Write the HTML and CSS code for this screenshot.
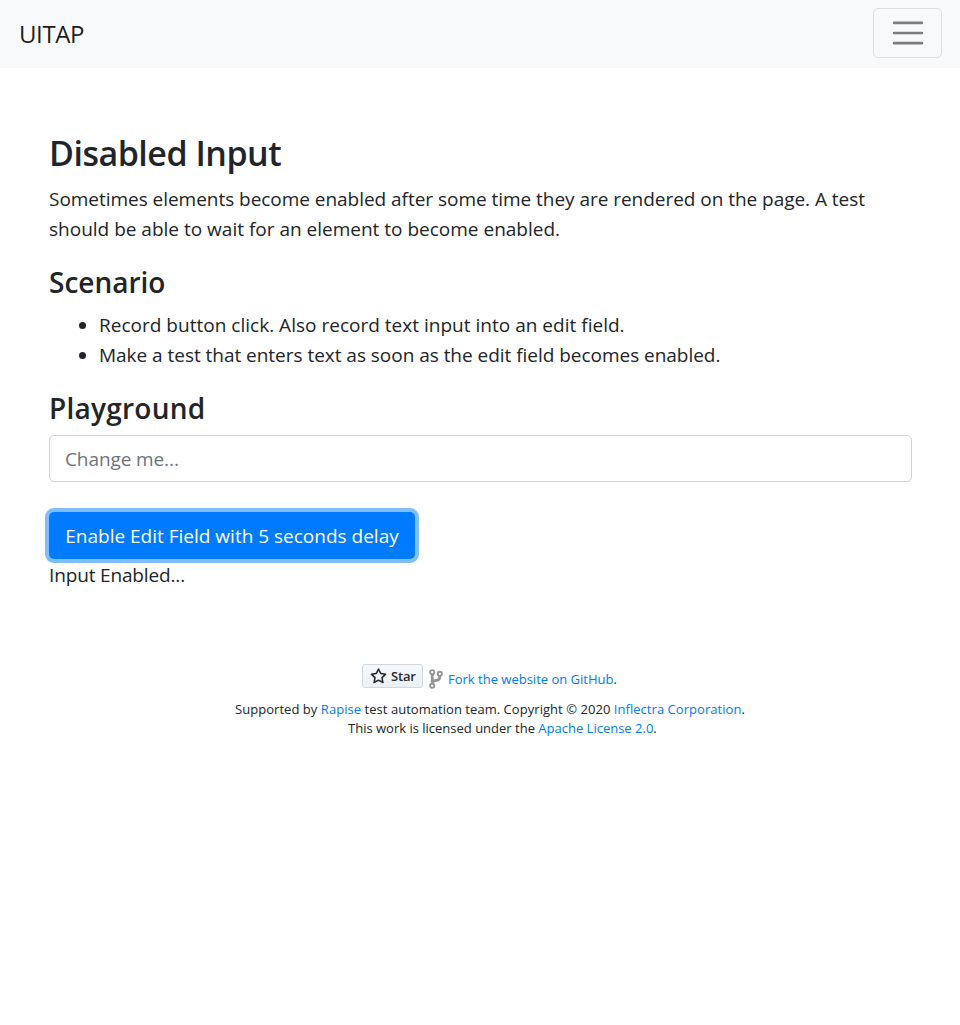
FILE: index.html
```html
<!DOCTYPE html>
<html lang="en">
<head>
<meta charset="utf-8">
<title>Disabled Input</title>
<link rel="stylesheet" href="styles.css">
</head>
<body>
<nav class="navbar">
  <a class="brand">UITAP</a>
  <button class="toggler" aria-label="Toggle navigation">
    <svg width="38" height="38" viewBox="0 0 30 30"><path d="M4 7h22M4 15h22M4 23h22" stroke="rgba(0,0,0,.5)" stroke-width="2" stroke-linecap="round" stroke-miterlimit="10"/></svg>
  </button>
</nav>
<main class="container">
  <h3 class="title"><span>Disabled Input</span></h3>
  <p class="intro"><span class="intro-first">Sometimes elements become enabled after some time they are rendered on the page. A test</span><br><span class="intro-second">should be able to wait for an element to become enabled.</span></p>
  <h4 class="scenario"><span>Scenario</span></h4>
  <ul class="steps">
    <li><span class="step-one">Record button click. Also record text input into an edit field.</span></li>
    <li><span class="step-two">Make a test that enters text as soon as the edit field becomes enabled.</span></li>
  </ul>
  <h4 class="playground"><span>Playground</span></h4>
  <input class="field" type="text" placeholder="Change me...">
  <button class="enable"><span>Enable Edit Field with 5 seconds delay</span></button>
  <div class="status"><span>Input Enabled...</span></div>
</main>
<footer class="footer">
  <div class="links">
    <a class="star"><svg width="17" height="17" viewBox="0 0 16 16"><path fill="#24292f" fill-rule="evenodd" d="M8 .25a.75.75 0 01.673.418l1.882 3.815 4.21.612a.75.75 0 01.416 1.279l-3.046 2.97.719 4.192a.75.75 0 01-1.088.791L8 12.347l-3.766 1.98a.75.75 0 01-1.088-.79l.72-4.194L.818 6.374a.75.75 0 01.416-1.28l4.21-.611L7.327.668A.75.75 0 018 .25zm0 2.445L6.615 5.5a.75.75 0 01-.564.41l-3.097.45 2.24 2.184a.75.75 0 01.216.664l-.528 3.084 2.769-1.456a.75.75 0 01.698 0l2.77 1.456-.53-3.084a.75.75 0 01.216-.664l2.24-2.183-3.096-.45a.75.75 0 01-.564-.41L8 2.694z"/></svg><span>Star</span></a>
    <svg class="fork" width="14" height="20" viewBox="0 0 14 20" fill="none" stroke="#959595"><circle cx="3.2" cy="3.2" r="2.1" stroke-width="1.9"/><circle cx="3.2" cy="16.8" r="2.1" stroke-width="1.9"/><circle cx="10.8" cy="4.8" r="2.1" stroke-width="1.9"/><path d="M3.2 5.5v9M10.8 7c0 4.2-1.8 4-4.5 4.6-1.8.4-3.1 1.2-3.1 2.6" stroke-width="2.8"/></svg>
    <span class="fork-text"><a>Fork the website on GitHub</a>.</span>
  </div>
  <div class="line"><span class="credit">Supported by <a>Rapise</a> test automation team. Copyright © 2020 <a>Inflectra Corporation</a>.</span></div>
  <div class="line shifted"><span class="license">This work is licensed under the <a>Apache License 2.0</a>.</span></div>
</footer>
</body>
</html>
```
FILE: styles.css
```css
* { box-sizing: border-box; }
body { margin: 0; background: #fff; color: #212529; font: 19px/30px "Open Sans", "Noto Sans", sans-serif; }
span { white-space: nowrap; }
.navbar { display: flex; justify-content: space-between; align-items: center; height: 68px; padding: 0 18px 2px 19px; background: #f8f9fa; }
.brand { padding-top: 1px; font-size: 24px; color: rgba(0,0,0,.9); letter-spacing: -.4px; }
.toggler { display: flex; align-items: center; justify-content: center; width: 69px; height: 50px; padding: 0; border: 1px solid rgba(0,0,0,.1); border-radius: 5px; background: transparent; }
.container { display: flex; flex-direction: column; padding: 64px 48px 0 49px; }
h3, h4 { margin: 0 0 10px; font-weight: 600; }
h3 { font-size: 34px; line-height: 42px; letter-spacing: -.5px; }
h4 { font-size: 28px; line-height: 36px; }
.scenario { letter-spacing: 0; }
.playground { margin-bottom: 9px; letter-spacing: .25px; }
.intro-first { letter-spacing: -.035px; }
.step-one { letter-spacing: .015px; }
.step-two { letter-spacing: -.03px; }
p { margin: 0 0 20px; }
.steps { margin: 0 0 20px; padding-left: 50px; }
.field { height: 47px; width: 863px; padding: 0 15px; border: 1px solid #ced4da; border-radius: 5px; background: #fff; font: inherit; letter-spacing: -.1px; }
.field::placeholder { color: #6c757d; opacity: 1; }
.enable { width: 366px; height: 47px; margin: 30px 0 1px; padding: 1px 0 0; border: 0; border-radius: 5px; background: #007bff; color: #fff; font: inherit; box-shadow: 0 0 0 4px #80bdff; }
.status { letter-spacing: -.15px; }
.footer { padding-top: 74px; font-size: 13px; line-height: 19px; }
.footer a { color: #007bff; }
.links { display: flex; align-items: flex-start; height: 36px; padding-left: 362px; }
.footer .star { display: flex; align-items: center; width: 61px; height: 24px; padding: 0 0 0 7px; gap: 4px; border: 1px solid #d0d7de; border-radius: 3px; background: linear-gradient(#f6f8fa, #ebf0f4); color: #24292f; font-weight: 600; letter-spacing: -.2px; }
.fork { margin: 5px 5px 0 6px; }
.fork-text { margin-top: 6px; }
.line { padding-left: 235px; }
.credit { letter-spacing: .045px; }
.shifted { padding-left: 348px; }
```
